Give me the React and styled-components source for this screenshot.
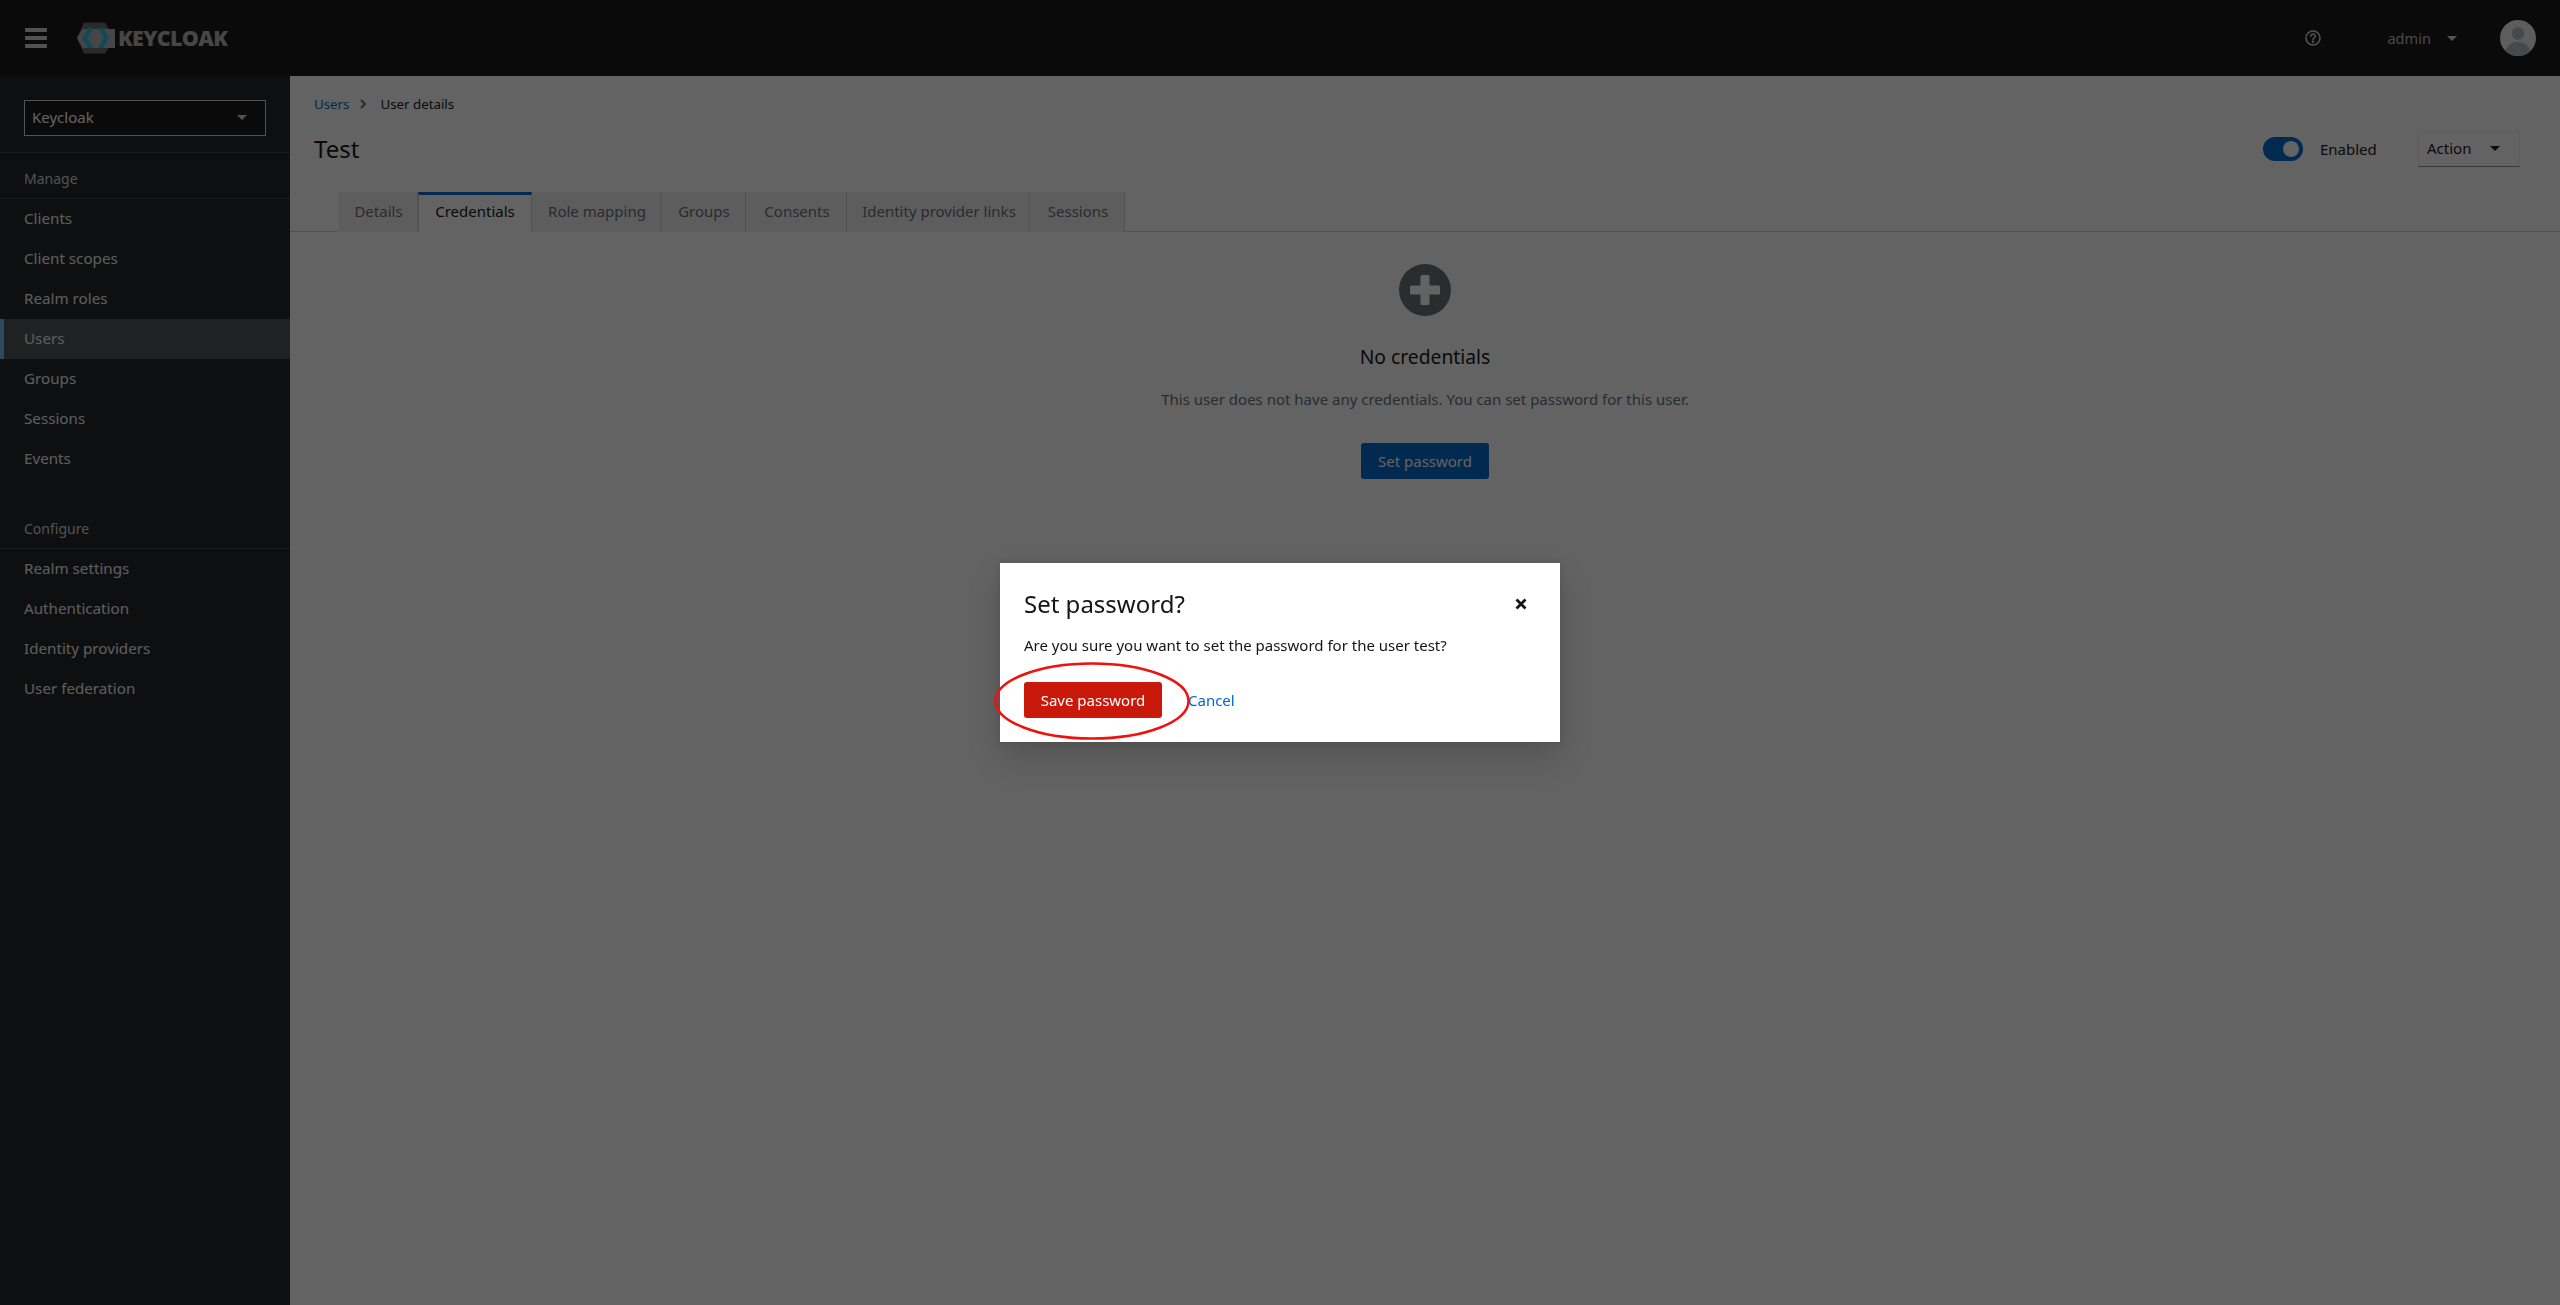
import React from "react";
import styled, { createGlobalStyle } from "styled-components";

const FONT = `"Noto Sans", "Liberation Sans", sans-serif`;

const Global = createGlobalStyle`
  html, body { margin: 0; padding: 0; height: 100%; background: #fff; }
  body { font-family: ${FONT}; font-size: 15px; color: #151515; overflow: hidden; }
  * { box-sizing: border-box; }
`;

const Page = styled.div`display: flex; flex-direction: column; height: 1305px;`;

const Masthead = styled.header`
  height: 76px; flex: none; background: #151515; display: flex; align-items: center;
  padding: 0 24px 0 25px; color: #fff;
`;
const Burger = styled.div`
  width: 22px; display: flex; flex-direction: column; gap: 4px; margin-right: 30px;
  & > span { display: block; height: 4px; background: #d2d2d2; border-radius: 1px; }
`;
const LogoRow = styled.div`display: flex; align-items: center; flex: 1;`;
const LogoWord = styled.span`
  font-family: "Open Sans", sans-serif; font-weight: 800; font-size: 21.5px; line-height: 1;
  letter-spacing: -0.7px; color: #b4b4b4; margin-left: 1px;
`;
const HelpWrap = styled.div`display: flex; margin-right: 66px;`;
const UserName = styled.span`font-size: 14.6px; color: #b8bbbe; margin-right: 16px; padding-bottom: 1px;`;
const Caret = styled.span`
  display: inline-block; width: 0; height: 0;
  border-left: 5px solid transparent; border-right: 5px solid transparent;
  border-top: 5px solid ${p => p.$color || "#151515"};
`;
const Avatar = styled.div`margin-left: 43px; width: 36px; height: 36px; display: flex;`;

const Body = styled.div`flex: 1; display: flex; min-height: 0;`;

const Sidebar = styled.aside`width: 290px; flex: none; background: #212427; display: flex; flex-direction: column;`;
const RealmWrap = styled.div`padding: 24px 24px 16px; border-bottom: 1px solid #3c3f42;`;
const RealmSelect = styled.div`
  height: 36px; background: #151515; border: 1px solid #d2d2d2; display: flex; align-items: center;
  justify-content: space-between; padding: 0 18px 2px 7px; font-size: 15px; color: #fff;
`;
const NavSection = styled.div`
  height: 46px; display: flex; align-items: center; padding: 6px 24px 0; font-size: 14px; color: #d2d2d2;
  border-bottom: 1px solid #3c3f42;
`;
const NavItem = styled.div`
  height: 40px; display: flex; align-items: center; padding: 0 0 2px 24px; font-size: 15.2px; color: #f0f0f0;
  background: ${p => (p.$active ? "#4f5255" : "transparent")};
  box-shadow: ${p => (p.$active ? "inset 4px 0 0 #73bcf7" : "none")};
`;
const NavSpacer = styled.div`height: 24px;`;

const Main = styled.main`flex: 1; background: #fff; display: flex; flex-direction: column; min-width: 0;`;
const TitleArea = styled.div`padding: 18px 24px 0; height: 116px; display: flex; flex-direction: column;`;
const Crumbs = styled.div`display: flex; align-items: center; font-size: 13.3px; line-height: 20px; color: #151515;`;
const CrumbLink = styled.span`color: #06c;`;
const CrumbSep = styled.span`display: flex; margin: 0 13px 0 11px;`;
const TitleRow = styled.div`display: flex; align-items: center; margin-top: 17px; height: 36px;`;
const PageTitle = styled.h1`margin: 0; font-size: 24px; font-weight: 400; flex: 1; line-height: 36px;`;
const Switch = styled.div`
  width: 40px; height: 24px; border-radius: 12px; background: #06c; display: flex; align-items: center;
  justify-content: flex-end; padding-right: 4px;
  & > span { width: 16px; height: 16px; border-radius: 50%; background: #fff; }
`;
const SwitchLabel = styled.span`margin-left: 17px; font-size: 15px; width: 98px; color: #151515;`;
const ActionBtn = styled.div`
  width: 102px; height: 36px; margin-right: 16px; display: flex; align-items: center; justify-content: space-between;
  padding: 0 19px 2px 8px; font-size: 15px; border: 1px solid #f0f0f0; border-bottom-color: #8a8d90;
`;
const Tabs = styled.div`display: flex; padding-left: 48px; height: 40px; border-bottom: 1px solid #d2d2d2;`;
const Tab = styled.div`
  height: 40px; width: ${p => p.$w}px; display: flex; align-items: center; justify-content: center; font-size: 15px;
  padding: 0 0 ${p => (p.$active ? "4px" : "2px")} ${p => (p.$active ? "0" : "2px")};
  background: ${p => (p.$active ? "#fff" : "#f0f0f0")};
  color: ${p => (p.$active ? "#151515" : "#6a6e73")};
  border-right: 1px solid #d2d2d2;
  border-top: ${p => (p.$active ? "3px solid #06c" : "none")};
  border-left: ${p => (p.$active ? "1px solid #d2d2d2" : "none")};
  border-bottom: ${p => (p.$active ? "1px solid #fff" : "none")};
`;
const Empty = styled.div`display: flex; flex-direction: column; align-items: center; padding-top: 32px;`;
const EmptyTitle = styled.h2`margin: 26px 0 0; font-size: 19.3px; font-weight: 400; line-height: 30px;`;
const EmptyText = styled.p`margin: 15px 0 0; font-size: 15px; line-height: 24px; color: #6a6e73;`;
const PrimaryBtn = styled.div`
  margin-top: 32px; height: 36px; width: 128px; background: #06c; border-radius: 3px; color: #fff;
  display: flex; align-items: center; justify-content: center; font-size: 15px; padding-bottom: 1px;
`;

const Backdrop = styled.div`
  position: fixed; inset: 0; background: rgba(3, 3, 3, 0.62);
  display: flex; align-items: center; justify-content: center;
`;
const Modal = styled.div`
  position: relative; width: 560px; height: 179px; background: #fff; padding: 24px;
  box-shadow: 0 16px 32px rgba(3,3,3,.16), 0 0 8px rgba(3,3,3,.1);
`;
const ModalHead = styled.div`display: flex; align-items: center; justify-content: space-between; height: 34px;`;
const ModalTitle = styled.h3`margin: 0; font-size: 24px; font-weight: 400; line-height: 34px;`;
const CloseBtn = styled.div`display: flex; margin-right: 9px;`;
const ModalText = styled.p`margin: 12px 0 0; font-size: 15px; line-height: 24px; color: #151515;`;
const ModalActions = styled.div`display: flex; align-items: center; margin-top: 25px;`;
const DangerBtn = styled.div`
  width: 138px; height: 36px; background: #c9190b; color: #fff; border-radius: 3px; font-size: 15px;
  display: flex; align-items: center; justify-content: center; padding-bottom: 1px;
`;
const LinkBtn = styled.span`margin-left: 26px; color: #06c; font-size: 15px; padding-bottom: 1px;`;
const Annotation = styled.svg`position: absolute; left: -6px; top: 99px; overflow: visible;`;

const Logo = () => (
  <svg width="40" height="32" viewBox="0 0 40 32">
    <path d="M7 0.500H28L38 16 28 31.500H7L0 16z" fill="#696969" />
    <path d="M5.500 7H38V26H5.500L0 16z" fill="#b4b4b4" />
    <path d="M11 6h5.500L10.500 16l6 10H11L5 16z" fill="#2fb8e4" />
    <path d="M21 6h5.500l5.500 10-5.500 10H21l5.500-10z" fill="#2fb8e4" />
  </svg>
);

const HelpIcon = () => (
  <svg width="16" height="16" viewBox="0 0 16 16" fill="none" stroke="#d2d2d2" strokeWidth="1.6">
    <circle cx="8" cy="8" r="7" />
    <path d="M5.800 6.200a2.200 2.200 0 1 1 3.300 1.900c-.7.4-1.100.8-1.100 1.600" strokeLinecap="round" />
    <circle cx="8" cy="11.800" r=".5" fill="#d2d2d2" />
  </svg>
);

const AvatarIcon = () => (
  <svg width="36" height="36" viewBox="0 0 36 36">
    <defs><clipPath id="av"><circle cx="18" cy="18" r="18" /></clipPath></defs>
    <g clipPath="url(#av)">
      <rect width="36" height="36" fill="#f0f0f0" />
      <circle cx="18" cy="13.500" r="6.200" fill="#b8bbbe" />
      <path d="M5 36c0-9 5-14 13-14s13 5 13 14z" fill="#b8bbbe" />
    </g>
  </svg>
);

const CrumbChevron = () => (
  <svg width="7" height="10" viewBox="0 0 7 10"><path d="M1 1l4 4-4 4" fill="none" stroke="#6a6e73" strokeWidth="2" /></svg>
);

const PlusCircle = () => (
  <svg width="52" height="52" viewBox="0 0 52 52">
    <circle cx="26" cy="26" r="26" fill="#6a6e73" />
    <rect x="21.500" y="11" width="9" height="30" rx="1.500" fill="#fff" />
    <rect x="11" y="21.500" width="30" height="9" rx="1.500" fill="#fff" />
  </svg>
);

const CloseIcon = () => (
  <svg width="12" height="12" viewBox="0 0 12 12"><path d="M1.500 1.500l9 9M10.500 1.500l-9 9" stroke="#151515" strokeWidth="2.800" /></svg>
);

const manage = ["Clients", "Client scopes", "Realm roles", "Users", "Groups", "Sessions", "Events"];
const configure = ["Realm settings", "Authentication", "Identity providers", "User federation"];
const tabs = [
  ["Details", 80], ["Credentials", 114], ["Role mapping", 129], ["Groups", 85],
  ["Consents", 101], ["Identity provider links", 183], ["Sessions", 95],
];

export default function App() {
  return (
    <>
      <Global />
      <Page>
        <Masthead>
          <Burger><span /><span /><span /></Burger>
          <LogoRow>
            <Logo />
            <LogoWord>KEYCLOAK</LogoWord>
          </LogoRow>
          <HelpWrap><HelpIcon /></HelpWrap>
          <UserName>admin</UserName>
          <Caret $color="#d2d2d2" />
          <Avatar><AvatarIcon /></Avatar>
        </Masthead>
        <Body>
          <Sidebar>
            <RealmWrap>
              <RealmSelect>Keycloak<Caret $color="#d2d2d2" /></RealmSelect>
            </RealmWrap>
            <NavSection>Manage</NavSection>
            {manage.map(n => <NavItem key={n} $active={n === "Users"}>{n}</NavItem>)}
            <NavSpacer />
            <NavSection>Configure</NavSection>
            {configure.map(n => <NavItem key={n}>{n}</NavItem>)}
          </Sidebar>
          <Main>
            <TitleArea>
              <Crumbs>
                <CrumbLink>Users</CrumbLink>
                <CrumbSep><CrumbChevron /></CrumbSep>
                User details
              </Crumbs>
              <TitleRow>
                <PageTitle>Test</PageTitle>
                <Switch><span /></Switch>
                <SwitchLabel>Enabled</SwitchLabel>
                <ActionBtn>Action<Caret /></ActionBtn>
              </TitleRow>
            </TitleArea>
            <Tabs>
              {tabs.map(([t, w]) => <Tab key={t} $w={w} $active={t === "Credentials"}>{t}</Tab>)}
            </Tabs>
            <Empty>
              <PlusCircle />
              <EmptyTitle>No credentials</EmptyTitle>
              <EmptyText>This user does not have any credentials. You can set password for this user.</EmptyText>
              <PrimaryBtn>Set password</PrimaryBtn>
            </Empty>
          </Main>
        </Body>
      </Page>
      <Backdrop>
        <Modal>
          <ModalHead>
            <ModalTitle>Set password?</ModalTitle>
            <CloseBtn><CloseIcon /></CloseBtn>
          </ModalHead>
          <ModalText>Are you sure you want to set the password for the user test?</ModalText>
          <ModalActions>
            <DangerBtn>Save password</DangerBtn>
            <LinkBtn>Cancel</LinkBtn>
          </ModalActions>
          <Annotation width="196" height="78" viewBox="0 0 196 78">
            <ellipse cx="98" cy="39" rx="96.500" ry="37.500" fill="none" stroke="#f0100c" strokeWidth="2.500" />
          </Annotation>
        </Modal>
      </Backdrop>
    </>
  );
}
